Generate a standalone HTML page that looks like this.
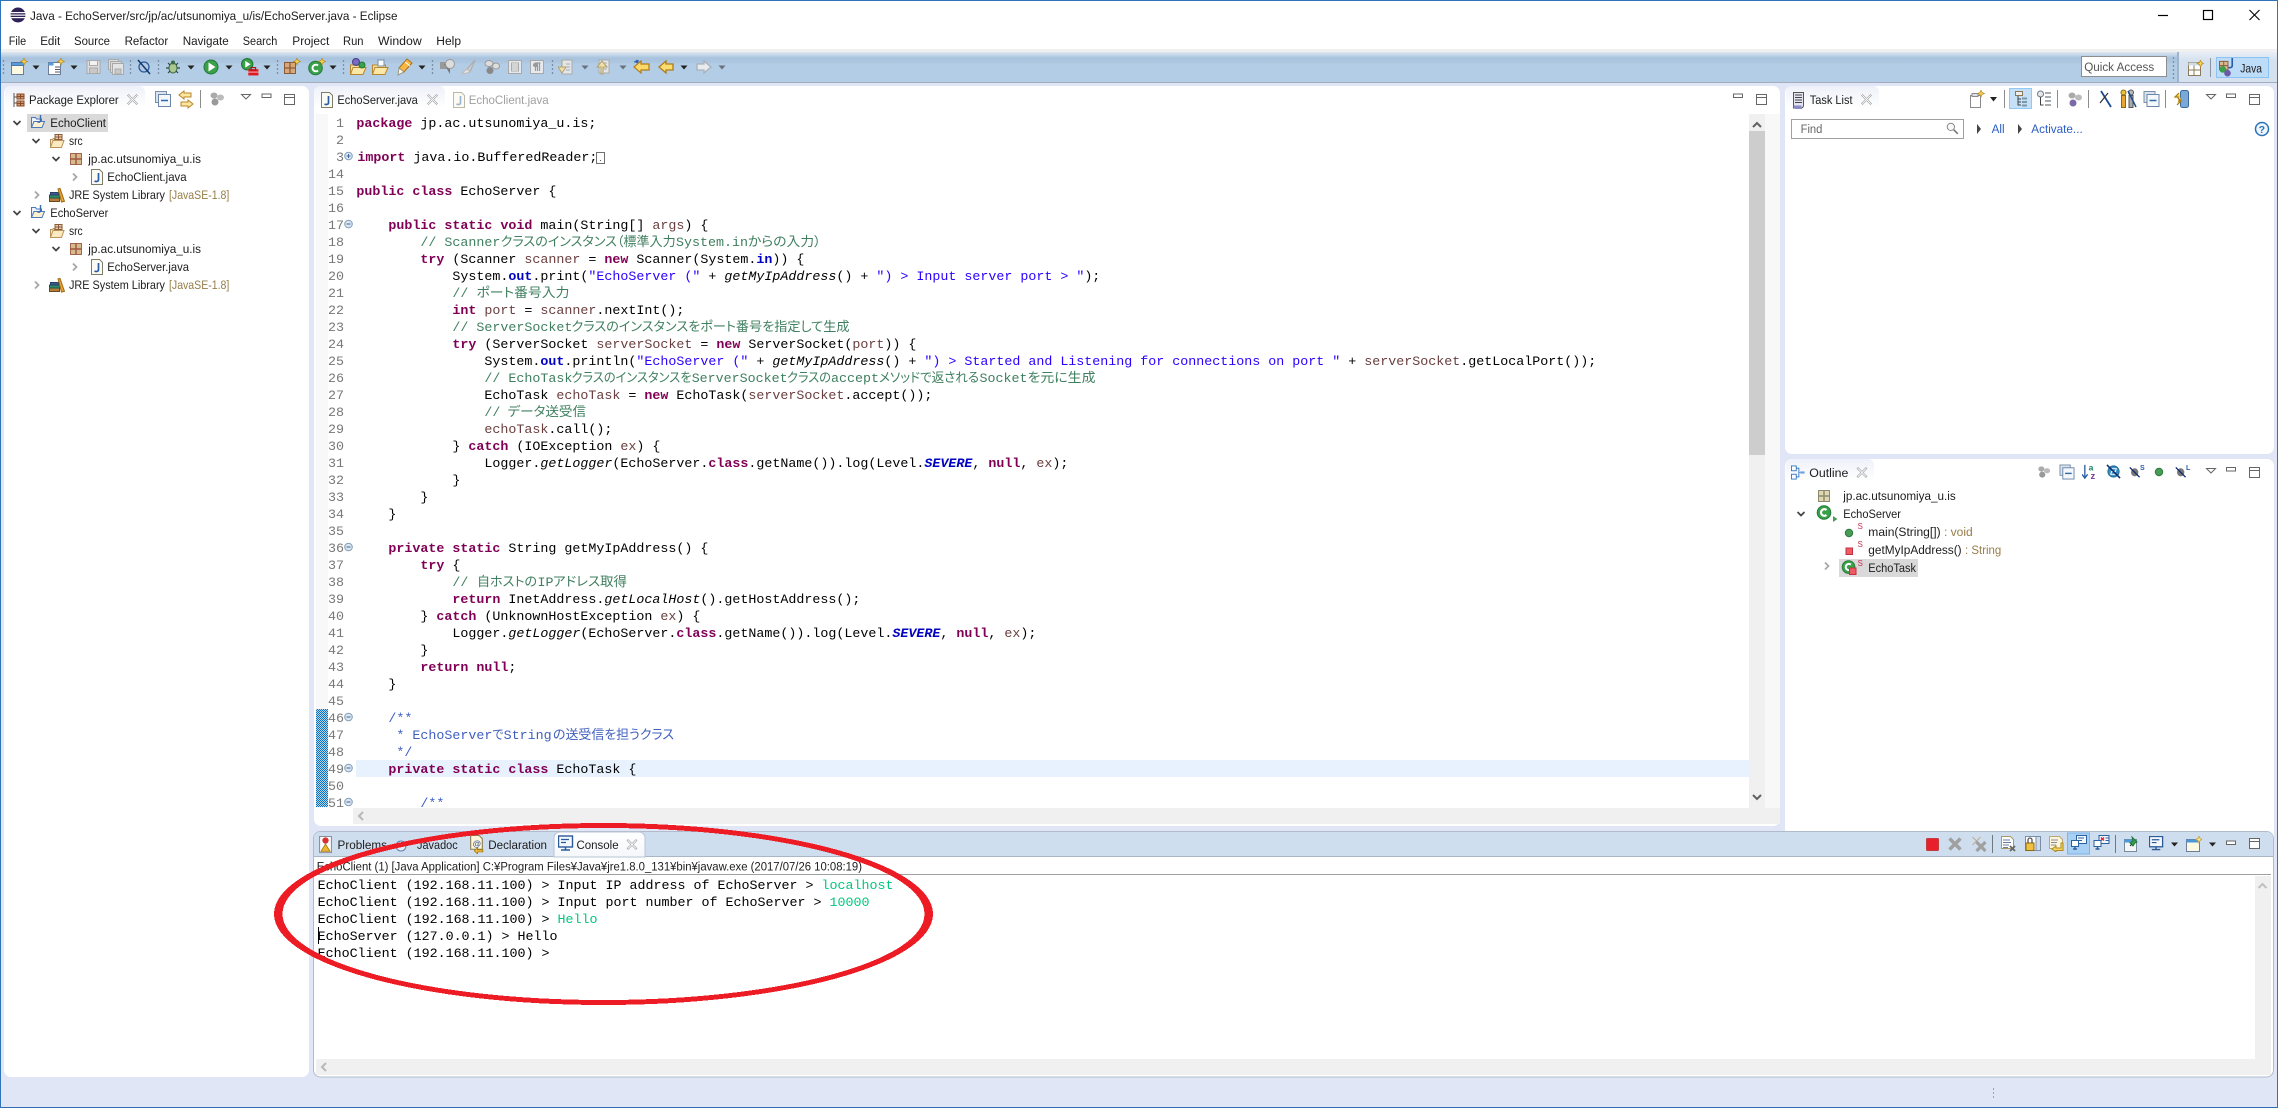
<!DOCTYPE html>
<html><head><meta charset="utf-8"><title>Java - EchoServer/src/jp/ac/utsunomiya_u/is/EchoServer.java - Eclipse</title>
<style>
html,body{margin:0;padding:0;background:#fff;width:2278px;height:1108px;overflow:hidden}
svg{display:block}
text{font-family:"Liberation Sans",sans-serif;font-size:12.4px;fill:#1c1c1c;white-space:pre}
.m text,text.m{font-family:"Liberation Mono",monospace;font-size:13.33px;fill:#000}
.n{font-family:"Liberation Mono",monospace!important;font-size:13.33px!important;fill:#787878!important;text-anchor:end}
.k{font-weight:bold;fill:#7f0055}
.s{fill:#2a00ff}
.c{fill:#3f7f5f}
.d{fill:#3f5fbf}
.f{font-weight:bold;font-style:italic;fill:#0000c0}
.o{font-weight:bold;fill:#0000c0}
.i{font-style:italic}
.v{fill:#6a3e3e}
.g{fill:#00c87d}
text.j{font-family:"Noto Sans CJK JP",sans-serif;font-size:13px;font-feature-settings:"palt";fill:#3f7f5f}
text.jd{fill:#3f5fbf}
.dec{fill:#957d47}
.lnk{fill:#2a5cc5}
</style></head><body>
<svg xmlns="http://www.w3.org/2000/svg" width="2278" height="1108" viewBox="0 0 2278 1108">
<defs>
<linearGradient id="tb" x1="0" y1="0" x2="0" y2="1"><stop offset="0" stop-color="#dfe7f1"/><stop offset=".2" stop-color="#a9c3de"/><stop offset=".35" stop-color="#adc7e1"/><stop offset=".4" stop-color="#b3cde6"/><stop offset="1" stop-color="#b3cde6"/></linearGradient>
<linearGradient id="ptb" x1="0" y1="0" x2="0" y2="1"><stop offset="0" stop-color="#e8eef6"/><stop offset=".3" stop-color="#d5e1ef"/><stop offset="1" stop-color="#d5e1ef"/></linearGradient>
<linearGradient id="tab" x1="0" y1="0" x2="0" y2="1"><stop offset="0" stop-color="#eef1f9"/><stop offset="1" stop-color="#ffffff"/></linearGradient>
<linearGradient id="ctab" x1="0" y1="0" x2="0" y2="1"><stop offset="0" stop-color="#ffffff"/><stop offset="1" stop-color="#f4f7fb"/></linearGradient>
<pattern id="ht" width="2" height="2" patternUnits="userSpaceOnUse"><rect width="2" height="2" fill="#b4d5ee"/><rect width="1" height="1" fill="#0a72c0"/><rect x="1" y="1" width="1" height="1" fill="#0a72c0"/></pattern>
<symbol id="ec" viewBox="0 0 16 16"><circle cx="8" cy="8" r="7.5" fill="#2c2255"/><rect x="0" y="5" width="16" height="1.2" fill="#fff"/><rect x="0" y="7.5" width="16" height="1.2" fill="#fff"/><rect x="0" y="10" width="16" height="1.2" fill="#fff"/></symbol>
<symbol id="pe" viewBox="0 0 16 16"><path d="M3 1v14" stroke="#555" fill="none"/><path d="M3 5h3M3 11h3" stroke="#555"/><rect x="6" y="2" width="7" height="5" fill="#c99a70" stroke="#8a4a28"/><path d="M9.5 2v5M6 4.5h7" stroke="#8a4a28"/><rect x="6" y="9" width="7" height="5" fill="#c99a70" stroke="#8a4a28"/><path d="M9.5 9v5M6 11.5h7" stroke="#8a4a28"/></symbol>
<symbol id="prj" viewBox="0 0 16 16"><path d="M1.5 13V3.5h4l1 1.5h5v3" fill="#eef3fb" stroke="#4a78b8"/><path d="M1.5 13.5l2.5-6h10.5l-2.5 6z" fill="#fdf1cf" stroke="#4a78b8"/><path d="M10.5 1v6c0 1-1.500 1.500-3 1" fill="none" stroke="#3a6ab0" stroke-width="1.400"/></symbol>
<symbol id="src" viewBox="0 0 16 16"><path d="M1.500 14V6.500h2l1-1h1V8" fill="#f8e8c4" stroke="#b8925a"/><path d="M1.500 14.500l2.500-7h11l-2.500 7z" fill="#fbe9c0" stroke="#b8925a"/><rect x="6" y="1.500" width="7" height="5" fill="#e8d0a8" stroke="#8a5a3a"/><path d="M9.500 1.500v5M6 4h7" stroke="#8a5a3a"/></symbol>
<symbol id="pk" viewBox="0 0 16 16"><rect x="2.500" y="2.500" width="11" height="11" fill="#d9b990" stroke="#a0664a"/><path d="M8 2v12M2 8h12" stroke="#9a5a3e" stroke-width="1.400"/></symbol>
<symbol id="pk2" viewBox="0 0 16 16"><rect x="2.500" y="2.500" width="11" height="11" fill="#dcd6b4" stroke="#8e8a6a"/><path d="M8 2v12M2 8h12" stroke="#8e8a6a" stroke-width="1.400"/></symbol>
<symbol id="jf" viewBox="0 0 16 16"><path d="M2.500 .5h8l3 3v12h-11z" fill="#fbfbf4" stroke="#7e7e68"/><path d="M9.500 4v6.500c0 2-2 2.500-4 1.500" stroke="#2a5ca8" stroke-width="1.700" fill="none"/></symbol>
<symbol id="jfg" viewBox="0 0 16 16"><path d="M2.500 .5h8l3 3v12h-11z" fill="#fbfbf4" stroke="#bbb8a8"/><path d="M9.500 4v6.500c0 2-2 2.500-4 1.500" stroke="#9db4d2" stroke-width="1.700" fill="none"/></symbol>
<symbol id="jre" viewBox="0 0 16 16"><rect x="0.500" y="11" width="10" height="3.500" fill="#b57c3c" stroke="#6a4a20"/><rect x="0.500" y="8" width="10" height="3" fill="#2f8a6a" stroke="#1e5a48"/><rect x="1.500" y="5.500" width="8" height="2.500" fill="#3a5a90" stroke="#26406a"/><path d="M9 2l2-.6 4.500 13-3 .6z" fill="#e6a53c" stroke="#a06a10"/></symbol>
<symbol id="cl" viewBox="0 0 14 14"><path d="M2 2l10 10M12 2L2 12" stroke="#8c8c8c" stroke-width="2.600" stroke-linecap="square"/><path d="M2 2l10 10M12 2L2 12" stroke="#fff" stroke-width="1.300" stroke-linecap="square"/></symbol>
<symbol id="col" viewBox="0 0 16 16"><rect x=".5" y=".5" width="11" height="11" fill="#dbe4ee" stroke="#7a8ea8"/><rect x="3.500" y="3.500" width="12" height="12" fill="#f4f7fb" stroke="#6a86a8"/><path d="M6 9.500h7" stroke="#2a6ab0" stroke-width="1.500"/></symbol>
<symbol id="lnk" viewBox="0 0 16 20"><path d="M6 1L1 5l5 4V7h7V3H6z" fill="#fbe7a0" stroke="#b8862a"/><path d="M10 10l5 4-5 4v-2H3v-4h7z" fill="#fbe7a0" stroke="#b8862a"/></symbol>
<symbol id="vw" viewBox="0 0 16 16"><ellipse cx="5" cy="4.500" rx="3.500" ry="3" fill="#aaa"/><ellipse cx="11.500" cy="6.500" rx="3.500" ry="3" fill="#bbb"/><ellipse cx="6" cy="11" rx="3.500" ry="3.500" fill="#999"/></symbol>
<symbol id="vw2" viewBox="0 0 16 16"><ellipse cx="5" cy="4.500" rx="3.500" ry="3" fill="#aaa"/><ellipse cx="11.500" cy="6.500" rx="3.500" ry="3" fill="#bbb"/><ellipse cx="6" cy="12" rx="3.500" ry="3.500" fill="#7a6aa8"/></symbol>
<symbol id="nw" viewBox="0 0 18 18"><rect x="1.500" y="4.500" width="12" height="12" fill="#fdf8e2" stroke="#6a7e98"/><rect x="1.500" y="4.500" width="12" height="3" fill="#5a9ad8" stroke="#4a78a8"/><path d="M14 0l1 2.500 2.500 1-2.500 1-1 2.500-1-2.500-2.500-1 2.500-1z" fill="#f8d850" stroke="#b88a20" stroke-width=".7"/></symbol>
<symbol id="nw2" viewBox="0 0 18 18"><rect x="1.500" y="4.500" width="12" height="12" fill="#fff" stroke="#6a7e98"/><rect x="1.500" y="4.500" width="5" height="3" fill="#5a9ad8"/><path d="M8 9h5M8 11.500h5M8 14h5" stroke="#556"/><path d="M14 0l1 2.500 2.500 1-2.500 1-1 2.500-1-2.500-2.500-1 2.500-1z" fill="#f8d850" stroke="#b88a20" stroke-width=".7"/></symbol>
<symbol id="sv" viewBox="0 0 16 16"><rect x="1.500" y="1.500" width="13" height="13" fill="#dcdcdc" stroke="#a8a8a8"/><rect x="4" y="1.500" width="8" height="5" fill="#f2f2f2" stroke="#aaa"/><rect x="4" y="9" width="8" height="5.500" fill="#c8c8c8" stroke="#aaa"/></symbol>
<symbol id="sva" viewBox="0 0 16 16"><rect x=".5" y=".5" width="10" height="10" fill="#dcdcdc" stroke="#aaa"/><rect x="2.500" y="2.500" width="11" height="11" fill="#dcdcdc" stroke="#aaa"/><rect x="4.500" y="4.500" width="11" height="11" fill="#e4e4e4" stroke="#a8a8a8"/><rect x="7" y="10" width="6" height="5" fill="#c8c8c8" stroke="#aaa"/></symbol>
<symbol id="skp" viewBox="0 0 16 16"><ellipse cx="8" cy="8" rx="5" ry="5" fill="#b4c8e0" stroke="#2a5a98" stroke-width="1.300"/><path d="M2 1l12 14" stroke="#123a70" stroke-width="1.500"/></symbol>
<symbol id="bug" viewBox="0 0 16 16"><ellipse cx="8" cy="9" rx="4" ry="5" fill="#a8c890" stroke="#3a6a4a"/><circle cx="8" cy="3.500" r="2" fill="#3a6a4a"/><path d="M3 4l2 2M13 4l-2 2M1 9h3M15 9h-3M3 14l2-2M13 14l-2-2" stroke="#2a4a38" stroke-width="1.200"/></symbol>
<symbol id="run" viewBox="0 0 16 16"><circle cx="8" cy="8" r="7" fill="#3aa04a" stroke="#227a38"/><path d="M5.500 3.500v9L12.500 8z" fill="#fff"/></symbol>
<symbol id="ext" viewBox="0 0 16 16"><circle cx="5.500" cy="5.500" r="5" fill="#3aa04a" stroke="#227a38"/><path d="M3.800 2.500v6L8.500 5.500z" fill="#fff"/><rect x="6.500" y="10" width="9" height="5.500" fill="#e01820"/><rect x="9" y="8.500" width="4" height="2" fill="none" stroke="#b01018"/><path d="M6.500 12.500h9" stroke="#fff" stroke-width=".6"/></symbol>
<symbol id="npk" viewBox="0 0 18 18"><rect x="1.500" y="4.500" width="11" height="11" fill="#d9a878" stroke="#8a5a38"/><path d="M7 4v12M1 10h12" stroke="#8a5a38" stroke-width="1.300"/><path d="M14 0l1 2.500 2.500 1-2.500 1-1 2.500-1-2.500-2.500-1 2.500-1z" fill="#f8d850" stroke="#b88a20" stroke-width=".7"/></symbol>
<symbol id="ncl" viewBox="0 0 18 18"><circle cx="7.500" cy="10" r="6.800" fill="#3aa04a" stroke="#227a38"/><path d="M10 7.500a3.300 3.300 0 1 0 0 5" stroke="#fff" stroke-width="2" fill="none"/><path d="M14 0l1 2.500 2.500 1-2.500 1-1 2.500-1-2.500-2.500-1 2.500-1z" fill="#f8d850" stroke="#b88a20" stroke-width=".7"/></symbol>
<symbol id="cc" viewBox="0 0 16 16"><circle cx="7.500" cy="7.500" r="6.800" fill="#3aa04a" stroke="#227a38"/><path d="M10 5a3.300 3.300 0 1 0 0 5" stroke="#fff" stroke-width="2.200" fill="none"/></symbol>
<symbol id="otp" viewBox="0 0 18 18"><path d="M1.500 16V7h13v2" fill="#f8e0a0" stroke="#b8862a"/><path d="M1.500 16.500L4 9.500h13l-3 7z" fill="#fbe7a8" stroke="#b8862a"/><circle cx="7" cy="4" r="3.500" fill="#7a6ac0" stroke="#4a3a88"/><circle cx="13" cy="7" r="3" fill="#3aa04a" stroke="#227a38"/></symbol>
<symbol id="opn" viewBox="0 0 18 18"><path d="M1.500 16V7h13v2" fill="#f8e0a0" stroke="#b8862a"/><path d="M1.500 16.500L4 9.500h13l-3 7z" fill="#fbe7a8" stroke="#b8862a"/><rect x="7" y="2" width="6" height="6" fill="#fff" stroke="#7a8ea8"/></symbol>
<symbol id="pen" viewBox="0 0 18 18"><path d="M11 1l5 4-8 9-5-4z" fill="#f8b840" stroke="#a8701a"/><path d="M3 10l5 4-6 3z" fill="#fffbe8" stroke="#998"/><path d="M9 4l5 4" stroke="#fff"/></symbol>
<symbol id="g1" viewBox="0 0 16 16"><rect x="1" y="3" width="7" height="7" fill="#999"/><path d="M5 5h6v10z" fill="#777"/><circle cx="11" cy="5" r="4.500" fill="#ddd" stroke="#999"/></symbol>
<symbol id="g2" viewBox="0 0 16 16"><path d="M14 1L6 10l3 3z" fill="#ccc" stroke="#aaa"/><path d="M6 10c-2 1-3 3-5 4 3 1 6 0 8-1z" fill="#e4e4e4" stroke="#bbb"/></symbol>
<symbol id="g3" viewBox="0 0 16 16"><ellipse cx="5" cy="4.500" rx="4" ry="3" fill="#ddd" stroke="#999"/><ellipse cx="12" cy="7" rx="3.500" ry="3" fill="#ddd" stroke="#999"/><ellipse cx="6" cy="11.500" rx="3.500" ry="3.500" fill="#888"/></symbol>
<symbol id="g4" viewBox="0 0 16 16"><rect x="1.500" y="1.500" width="13" height="13" fill="#e4e8ec" stroke="#a8a8a8"/><rect x="4.500" y="4" width="7" height="8" fill="#fff" stroke="#aaa"/><path d="M5 6h6M5 8h6M5 10h6" stroke="#aaa"/></symbol>
<symbol id="g5" viewBox="0 0 16 16"><rect x="1.500" y="1.500" width="13" height="13" fill="#e6eaee" stroke="#a8a8a8"/><path d="M6.500 12V4h5M8.500 12V4M10.500 12V4" stroke="#999" stroke-width="1.200" fill="none"/><path d="M8 4H6a2 2 0 0 0 0 4h2z" fill="#999"/></symbol>
<symbol id="ann" viewBox="0 0 16 16"><path d="M4 1h10v14H4z" fill="#e2e6ea" stroke="#aaa"/><path d="M8 5h4M8 8h4M8 11h4" stroke="#aaa"/><path d="M4 1v7h4L4 14 0 8h4z" fill="#f0dfa8" stroke="#b0a070"/></symbol>
<symbol id="anu" viewBox="0 0 16 16"><path d="M4 1h10v13H4z" fill="#e2e6ea" stroke="#aaa"/><path d="M8 4h4M8 7h4M8 10h4" stroke="#aaa"/><path d="M6 15V8H2l5-6 5 6H8v7z" fill="#f0dfa8" stroke="#b0a070"/></symbol>
<symbol id="ykp" viewBox="0 0 18 16"><path d="M1 8l7-6v3h8v6H8v3z" fill="#fbd868" stroke="#b07c1a" stroke-width="1.200"/><path d="M3 1l2 3M1 3l5-1M3 4l2-3" stroke="#2a5ca8" stroke-width="1.100"/></symbol>
<symbol id="yl" viewBox="0 0 16 16"><path d="M1 8l7-6v3h7v6H8v3z" fill="#fbdc70" stroke="#b07c1a" stroke-width="1.300"/></symbol>
<symbol id="gr" viewBox="0 0 16 16"><path d="M15 8L8 2v3H1v6h7v3z" fill="#e8ecf0" stroke="#aab0b8" stroke-width="1.300"/></symbol>
<symbol id="ts" viewBox="0 0 14 18"><path d="M1.500 1.500h10v13c0 2-2 3-3 2.500h-7z" fill="#e4e4f2" stroke="#555"/><path d="M3 4h7M3 6.500h7M3 9h7M3 11.500h7" stroke="#444"/><path d="M1.500 14.500h8v3.500h-6c-1.500 0-2-1.500-2-3.500z" fill="#8a8ac8"/></symbol>
<symbol id="ntk" viewBox="0 0 16 18"><rect x="1.500" y="5.500" width="10" height="12" fill="#fff" stroke="#8a8a8a"/><rect x="3" y="3.500" width="6" height="3" fill="#dde" stroke="#8a8a8a"/><path d="M12 0l1 2.500 2.500 1-2.500 1-1 2.500-1-2.500-2.500-1 2.500-1z" fill="#f8d850" stroke="#b88a20" stroke-width=".7"/></symbol>
<symbol id="tr1" viewBox="0 0 16 18"><rect x="2.500" y="1.500" width="7" height="4" fill="#eee" stroke="#8a7a5a"/><path d="M5 6v9h3M5 9h3M5 12h3" stroke="#444" fill="none"/><rect x="9" y="7.500" width="5" height="2" fill="#79a" /><rect x="9" y="11" width="5" height="2" fill="#79a"/><rect x="9" y="14.500" width="5" height="2" fill="#79a"/></symbol>
<symbol id="tr2" viewBox="0 0 16 18"><circle cx="4.500" cy="4" r="3" fill="#e8e8e8" stroke="#6a7a8a"/><path d="M4.500 7v8h3" stroke="#444" fill="none"/><path d="M9 3h6M9 7h6M9 11h6M9 15h6" stroke="#8a9098" stroke-width="1.500"/></symbol>
<symbol id="sx" viewBox="0 0 16 20"><path d="M3 2l10 16" stroke="#1a4a90" stroke-width="1.800"/><path d="M2 14l8-10" stroke="#333" stroke-width="1.200"/></symbol>
<symbol id="ppl" viewBox="0 0 18 20"><circle cx="4.500" cy="3.500" r="2.500" fill="#f0c040" stroke="#8a6a10"/><rect x="2.500" y="6.500" width="4" height="12" fill="#e8a830" stroke="#8a6a10"/><circle cx="12" cy="3.500" r="2.500" fill="#bbb" stroke="#555"/><rect x="10" y="6.500" width="4" height="12" fill="#aaa" stroke="#555"/><path d="M9 2l8 16" stroke="#1a4a90" stroke-width="1.500"/></symbol>
<symbol id="syn" viewBox="0 0 16 20"><rect x="6.500" y="1.500" width="8" height="17" rx="2" fill="#7aa8d8" stroke="#3a6a9a"/><path d="M5 4l-4 4 3 0c0 2 1 3 3 3M3 16l4-4-3 0" fill="#f8d850" stroke="#a87a10" stroke-width="1.200"/></symbol>
<symbol id="srch" viewBox="0 0 16 16"><circle cx="6" cy="6" r="4.500" fill="#f8f8f8" stroke="#888" stroke-width="1.200"/><path d="M9.500 9.500l5 5" stroke="#777" stroke-width="2"/></symbol>
<symbol id="out" viewBox="0 0 16 16"><rect x=".5" y=".5" width="5.500" height="5.500" fill="#fff" stroke="#2a72c0"/><rect x=".5" y="10" width="5.500" height="5.500" fill="#fff" stroke="#2a72c0"/><path d="M6 3h3v10H6M9 8h1" stroke="#2a72c0" fill="none"/><rect x="10.500" y="6.800" width="5" height="2.400" fill="#6aa0d8"/></symbol>
<symbol id="az" viewBox="0 0 18 18"><path d="M3 2v13M0 12l3 4 3-4" stroke="#2a5ca8" stroke-width="1.400" fill="none"/><text x="7" y="8" style="font:bold 9px 'Liberation Sans',sans-serif;fill:#1a8060">a</text><text x="9" y="17" style="font:bold 10px 'Liberation Sans',sans-serif;fill:#7a3a98">z</text></symbol>
<symbol id="nof" viewBox="0 0 16 16"><circle cx="8" cy="8" r="6" fill="#3a90c0" stroke="#1a6a98"/><path d="M6 5h5l-1 3H6l-1 3h5" stroke="#fff" fill="none"/><path d="M1 1l14 14" stroke="#0d2a70" stroke-width="1.600"/></symbol>
<symbol id="nos" viewBox="0 0 16 16"><ellipse cx="7" cy="9" rx="4.500" ry="5" fill="#777"/><path d="M1 3l12 12" stroke="#0d2a70" stroke-width="1.600"/></symbol>
<symbol id="stop" viewBox="0 0 14 14"><rect x=".5" y=".5" width="13" height="13" rx="1" fill="#e8202c" stroke="#c04040"/></symbol>
<symbol id="xg" viewBox="0 0 16 16"><path d="M2.500 2.500l11 11M13.500 2.500l-11 11" stroke="#a0a0a0" stroke-width="3.400"/></symbol>
<symbol id="xxg" viewBox="0 0 16 16"><path d="M2 1l8 8M10 1L2 9" stroke="#ddd" stroke-width="3" /><path d="M2 1l8 8M10 1L2 9" stroke="#aaa" stroke-width="1"/><path d="M6 6l9 9M15 6l-9 9" stroke="#a0a0a0" stroke-width="3.200"/></symbol>
<symbol id="clr" viewBox="0 0 16 16"><path d="M1.500 .5h9l3 3v9h-12z" fill="#fff" stroke="#a89a6a"/><path d="M3 4h7M3 6.500h8M3 9h6M3 11.500h5" stroke="#6a7e9a"/><path d="M10 10l5 5M15 10l-5 5" stroke="#666" stroke-width="1.800"/></symbol>
<symbol id="lck" viewBox="0 0 16 16"><rect x=".5" y=".5" width="15" height="14" fill="#fff" stroke="#7a8ea8"/><rect x="11" y=".5" width="4.500" height="14" fill="#cfdaea" stroke="#7a8ea8"/><rect x="1" y="7" width="8" height="7.500" fill="#f0c040" stroke="#8a6a10"/><path d="M3 7V4a2 2 0 0 1 4 0v3" fill="none" stroke="#555" stroke-width="1.300"/></symbol>
<symbol id="wrp" viewBox="0 0 16 16"><path d="M1.500 .5h10l3 3v9h-13z" fill="#fdf6dc" stroke="#b8a878"/><path d="M3 4h7M3 6.500h6M3 9h5" stroke="#8a8a90"/><path d="M13 7v5H8V10l-4 3 4 3v-1.500h7V7z" fill="#f8d860" stroke="#b08a20"/></symbol>
<symbol id="cs1" viewBox="0 0 16 16"><rect x="5.500" y=".5" width="10" height="8" fill="#f4f7fc" stroke="#2a62a0"/><path d="M7 3h6M7 5.500h4" stroke="#2a62a0"/><rect x=".5" y="5.500" width="7" height="6" fill="#fff" stroke="#2a62a0"/><path d="M2 14h4M4 11.500V14" stroke="#2a62a0" stroke-width="1.400"/></symbol>
<symbol id="cs2" viewBox="0 0 16 16"><rect x="5.500" y=".5" width="10" height="8" fill="#f4f7fc" stroke="#2a62a0"/><path d="M7.500 2.500l3 3M10.500 2.500l-3 3" stroke="#e02030" stroke-width="1.400"/><path d="M12 3h3M12 5.500h3" stroke="#2a62a0"/><rect x=".5" y="5.500" width="7" height="6" fill="#fff" stroke="#2a62a0"/><path d="M2 14h4M4 11.500V14" stroke="#2a62a0" stroke-width="1.400"/></symbol>
<symbol id="pin" viewBox="0 0 16 16"><rect x=".5" y="3.500" width="12" height="12" fill="#f4f7fa" stroke="#7a8a9a"/><rect x=".5" y="3.500" width="12" height="3" fill="#4a98d8"/><path d="M8 1l5 5-2 1-2 3-3-3 3-2z" fill="#3aa04a" stroke="#227a38"/><path d="M6 10l2-2" stroke="#333"/></symbol>
<symbol id="mon" viewBox="0 0 16 16"><rect x=".5" y=".5" width="14" height="11" fill="#f4f7fc" stroke="#2a5a98" stroke-width="1.400"/><path d="M3 4h8M3 7h5" stroke="#2a5a98" stroke-width="1.300"/><path d="M3 14.500h9M7.500 11.500v3" stroke="#2a5a98" stroke-width="1.500"/></symbol>
<symbol id="ncs" viewBox="0 0 16 16"><rect x=".5" y="3.500" width="13" height="12" fill="#fdf8e2" stroke="#6a7e98"/><rect x=".5" y="3.500" width="13" height="3" fill="#4a98d8"/><path d="M13 0l1 2.500 2 1-2 1-1 2.500-1-2.500-2.500-1 2.500-1z" fill="#fbe890" stroke="#c09a30" stroke-width=".7"/></symbol>
<symbol id="per" viewBox="0 0 16 16"><rect x=".5" y="2.500" width="12" height="13" fill="#fff" stroke="#8a7a5a"/><rect x=".5" y="2.500" width="12" height="3" fill="#cfdde8"/><path d="M6 5.500v10M.5 10h12" stroke="#8a7a5a"/><path d="M12.500 0l1 2.500 2 1-2 1-1 2.500-1-2.500-2.500-1 2.500-1z" fill="#f8d850" stroke="#b88a20" stroke-width=".7"/></symbol>
<symbol id="jva" viewBox="0 0 18 20"><rect x=".5" y="3.500" width="9" height="9" fill="#d9b990" stroke="#8a5a38"/><path d="M5 3v10M0 8h10" stroke="#8a5a38"/><path d="M14 0v8c0 2-2 2.500-4 2" fill="none" stroke="#2a5ca8" stroke-width="1.700"/><circle cx="4" cy="12" r="3.500" fill="#3aa04a"/><circle cx="9" cy="16" r="3.500" fill="#6a5aa8"/></symbol>
<symbol id="wdoc" viewBox="0 0 14 18"><path d="M1.500 .5h8l3 3v10h-11z" fill="#fdf6dc" stroke="#8a7a4a"/><text x="3.500" y="11" style="font:bold 8px 'Liberation Sans',sans-serif;fill:#3a5a98">@</text><path d="M5 15l3-3v2h5v2H8v2z" fill="#f8c040" stroke="#a87a10" stroke-width=".8"/></symbol>
<symbol id="prb" viewBox="0 0 14 20"><rect x=".5" y=".5" width="13" height="18" fill="#fff" stroke="#7a8090"/><circle cx="7" cy="5" r="3.500" fill="#d83030"/><path d="M7 9l5 8H2z" fill="#f0b830" stroke="#a87a10"/></symbol>
</defs>

<!-- window chrome -->
<rect width="2278" height="1108" fill="#e0e6f5"/>
<rect width="2278" height="49" fill="#fff"/>
<rect y="49" width="2278" height="3" fill="#f0f0f0"/>
<rect y="52" width="2178" height="30" fill="url(#tb)"/>
<rect x="2178" y="52" width="100" height="30" fill="url(#ptb)"/>
<rect y="82" width="2278" height="1" fill="#a3adbd"/>
<rect x="2177" y="52" width="2" height="30" fill="#9fb4cb"/>
<rect y="0" width="2278" height="1" fill="#2f73b8"/>
<rect y="1107" width="2278" height="1" fill="#2f6db0"/>
<rect x="0" width="1" height="1108" fill="#2f73b8"/>
<rect x="2277" width="1" height="1108" fill="#2f73b8"/>

<!-- title -->
<use href="#ec" x="10" y="7" width="16" height="16"/>
<text x="30" y="20" textLength="367.5" lengthAdjust="spacingAndGlyphs">Java - EchoServer/src/jp/ac/utsunomiya_u/is/EchoServer.java - Eclipse</text>
<path d="M2158 15.500h10" stroke="#000" stroke-width="1.200"/>
<rect x="2203.500" y="10.500" width="9" height="9" fill="none" stroke="#000" stroke-width="1.200"/>
<path d="M2249.500 10l10 10M2259.500 10l-10 10" stroke="#000" stroke-width="1.100"/>

<!-- menu -->
<g>
<text x="8.700" y="45" textLength="17.500" lengthAdjust="spacingAndGlyphs">File</text>
<text x="40.200" y="45" textLength="20" lengthAdjust="spacingAndGlyphs">Edit</text>
<text x="74" y="45" textLength="36" lengthAdjust="spacingAndGlyphs">Source</text>
<text x="124.600" y="45" textLength="43.600" lengthAdjust="spacingAndGlyphs">Refactor</text>
<text x="182.700" y="45" textLength="46" lengthAdjust="spacingAndGlyphs">Navigate</text>
<text x="242.800" y="45" textLength="34.500" lengthAdjust="spacingAndGlyphs">Search</text>
<text x="292.300" y="45" textLength="37" lengthAdjust="spacingAndGlyphs">Project</text>
<text x="343" y="45" textLength="20.500" lengthAdjust="spacingAndGlyphs">Run</text>
<text x="378" y="45" textLength="43.700" lengthAdjust="spacingAndGlyphs">Window</text>
<text x="436.300" y="45" textLength="24.700" lengthAdjust="spacingAndGlyphs">Help</text>
</g>

<!-- toolbar grips -->
<g stroke="#7c8ea4" stroke-width="1.300" stroke-dasharray="2 2">
<path d="M3.500 60v16M130.500 60v16M158.500 60v16M277.500 60v16M343.500 60v16M432.500 60v16M552.500 60v16M2173.500 57v22"/>
</g>
<!-- toolbar icons -->
<use href="#nw" x="10" y="58" width="18" height="18"/>
<use href="#nw2" x="47" y="58" width="18" height="18"/>
<use href="#sv" x="85.500" y="59" width="16" height="16"/>
<use href="#sva" x="108" y="59" width="16" height="16"/>
<use href="#skp" x="136" y="59" width="16" height="16"/>
<use href="#bug" x="165" y="59" width="16" height="16"/>
<use href="#run" x="203" y="59" width="16" height="16"/>
<use href="#ext" x="241" y="58" width="18" height="18"/>
<use href="#npk" x="283" y="58" width="18" height="18"/>
<use href="#ncl" x="308" y="58" width="18" height="18"/>
<use href="#otp" x="349" y="58" width="18" height="18"/>
<use href="#opn" x="371" y="58" width="18" height="18"/>
<use href="#pen" x="396" y="58" width="18" height="18"/>
<use href="#g1" x="439" y="59" width="16" height="16"/>
<use href="#g2" x="461" y="59" width="16" height="16"/>
<use href="#g3" x="484" y="59" width="16" height="16"/>
<use href="#g4" x="507" y="59" width="16" height="16"/>
<use href="#g5" x="529" y="59" width="16" height="16"/>
<use href="#ann" x="558" y="59" width="16" height="16"/>
<use href="#anu" x="595" y="59" width="16" height="16"/>
<use href="#ykp" x="633" y="59" width="18" height="16"/>
<use href="#yl" x="658" y="59" width="16" height="16"/>
<use href="#gr" x="696" y="59" width="16" height="16"/>
<g fill="#222">
<path d="M32.500 65.500h7l-3.500 4zM70.500 65.500h7l-3.500 4zM187.500 65.500h7l-3.500 4zM225.500 65.500h7l-3.500 4zM263.500 65.500h7l-3.500 4zM329.500 65.500h7l-3.500 4zM418.500 65.500h7l-3.500 4zM680.500 65.500h7l-3.500 4z"/>
</g>
<g fill="#68717d"><path d="M581.500 65.500h7l-3.500 4zM619.500 65.500h7l-3.500 4zM718.500 65.500h7l-3.500 4z"/></g>

<!-- quick access & perspective -->
<rect x="2081.500" y="56.500" width="85" height="20" fill="#fff" stroke="#8e8e8e"/>
<text x="2084.200" y="71" textLength="70" lengthAdjust="spacingAndGlyphs" style="fill:#555">Quick Access</text>
<use href="#per" x="2188" y="60" width="16" height="16"/>
<rect x="2210" y="58" width="1" height="19" fill="#8a95a4"/>
<rect x="2216.500" y="57.500" width="52" height="20" fill="#bcdcf8" stroke="#8cc3f5"/>
<use href="#jva" x="2219" y="58" width="17" height="19"/>
<text x="2240.300" y="72.700" textLength="21.700" lengthAdjust="spacingAndGlyphs">Java</text>

<!-- package explorer panel -->
<rect x="4" y="86" width="305" height="991" rx="7" fill="#fff"/>
<path d="M5 108V92a6 6 0 0 1 6-6h128a6 6 0 0 1 6 6v16z" fill="url(#tab)"/>
<use href="#pe" x="11" y="92" width="16" height="16"/>
<text x="29" y="104" textLength="89.700" lengthAdjust="spacingAndGlyphs">Package Explorer</text>
<use href="#cl" x="127" y="94" width="11" height="11"/>
<use href="#col" x="155" y="91" width="16" height="16"/>
<use href="#lnk" x="178" y="90" width="16" height="20"/>
<rect x="200" y="90" width="1" height="18" fill="#8c8c8c"/>
<use href="#vw" x="209" y="91" width="16" height="16"/>
<path d="M241.500 94.500h9l-4.500 4.500z" fill="#fff" stroke="#666"/>
<rect x="262" y="94" width="9" height="3.500" fill="#fff" stroke="#666"/>
<rect x="284.500" y="94.500" width="10" height="10" fill="#fff" stroke="#666"/><path d="M284.500 97.500h10" stroke="#666"/>

<rect x="27" y="114" width="81" height="18" fill="#d9d9d9"/>
<g fill="none" stroke="#444" stroke-width="1.700"><path d="M13.500 121l3.500 3.500 3.500-3.500M32.500 139l3.500 3.500 3.500-3.500M52.500 157l3.500 3.500 3.500-3.500M13.500 211l3.500 3.500 3.500-3.500M32.500 229l3.500 3.500 3.500-3.500M52.500 247l3.500 3.500 3.500-3.500"/></g>
<g fill="none" stroke="#a8a8a8" stroke-width="1.800"><path d="M73 173.500l3.500 3.500-3.500 3.500M35 191.500l3.500 3.500-3.500 3.500M73 263.500l3.500 3.500-3.500 3.500M35 281.500l3.500 3.500-3.500 3.500"/></g>
<use href="#prj" x="30" y="114" width="16" height="16"/>
<use href="#src" x="49" y="133" width="16" height="16"/>
<use href="#pk" x="68" y="151" width="16" height="16"/>
<use href="#jf" x="89" y="169" width="16" height="16"/>
<use href="#jre" x="49" y="187" width="16" height="16"/>
<use href="#prj" x="30" y="204" width="16" height="16"/>
<use href="#src" x="49" y="223" width="16" height="16"/>
<use href="#pk" x="68" y="241" width="16" height="16"/>
<use href="#jf" x="89" y="259" width="16" height="16"/>
<use href="#jre" x="49" y="277" width="16" height="16"/>
<text x="50.300" y="127" textLength="55.700" lengthAdjust="spacingAndGlyphs">EchoClient</text>
<text x="69" y="145" textLength="13.700" lengthAdjust="spacingAndGlyphs">src</text>
<text x="88.300" y="163" textLength="112.700" lengthAdjust="spacingAndGlyphs">jp.ac.utsunomiya_u.is</text>
<text x="107.300" y="181" textLength="79.300" lengthAdjust="spacingAndGlyphs">EchoClient.java</text>
<text x="69" y="199" textLength="96" lengthAdjust="spacingAndGlyphs">JRE System Library</text>
<text x="169" y="199" textLength="60.300" lengthAdjust="spacingAndGlyphs" class="dec">[JavaSE-1.8]</text>
<text x="50.300" y="217" textLength="58" lengthAdjust="spacingAndGlyphs">EchoServer</text>
<text x="69" y="235" textLength="13.700" lengthAdjust="spacingAndGlyphs">src</text>
<text x="88.300" y="253" textLength="112.700" lengthAdjust="spacingAndGlyphs">jp.ac.utsunomiya_u.is</text>
<text x="107.300" y="271" textLength="81.700" lengthAdjust="spacingAndGlyphs">EchoServer.java</text>
<text x="69" y="289" textLength="96" lengthAdjust="spacingAndGlyphs">JRE System Library</text>
<text x="169" y="289" textLength="60.300" lengthAdjust="spacingAndGlyphs" class="dec">[JavaSE-1.8]</text>

<!-- editor panel -->
<rect x="314" y="86" width="1466" height="740" rx="7" fill="#fff"/>
<path d="M314 108V92a6 6 0 0 1 6-6h119a6 6 0 0 1 6 6v16z" fill="url(#tab)"/>
<use href="#jf" x="319" y="92" width="16" height="16"/>
<text x="337.400" y="104" textLength="80.400" lengthAdjust="spacingAndGlyphs">EchoServer.java</text>
<use href="#cl" x="427" y="94" width="11" height="11"/>
<use href="#jfg" x="451" y="92" width="16" height="16"/>
<text x="468.700" y="104" textLength="80" lengthAdjust="spacingAndGlyphs" style="fill:#a0a0a0">EchoClient.java</text>
<rect x="1733.500" y="94" width="9" height="3.500" fill="#fff" stroke="#666"/>
<rect x="1756.500" y="94.500" width="10" height="10" fill="#fff" stroke="#666"/><path d="M1756.500 97.500h10" stroke="#666"/>

<rect x="316" y="114" width="12" height="694" fill="#f8f8f8"/>
<rect x="316" y="709" width="12" height="98" fill="url(#ht)"/>
<rect x="356" y="760" width="1393" height="17" fill="#e8f2fe"/>
<!-- scrollbars -->
<rect x="1749" y="114" width="16" height="694" fill="#f0f0f0"/>
<rect x="1749" y="131" width="16" height="324" fill="#cdcdcd"/>
<rect x="1765" y="114" width="15" height="694" fill="#f8f8f8"/>
<path d="M1753 127l4-4 4 4" fill="none" stroke="#606060" stroke-width="2"/>
<path d="M1753 795l4 4 4-4" fill="none" stroke="#606060" stroke-width="2"/>
<rect x="353" y="808" width="1427" height="16" fill="#f0f0f0"/>
<path d="M363 812l-4 4 4 4" fill="none" stroke="#b8b8b8" stroke-width="2"/>

<!-- fold markers -->
<g fill="#dde6f0" stroke="#7e9bb8">
<circle cx="348.500" cy="156" r="3.800"/><circle cx="348.500" cy="224" r="3.800"/><circle cx="348.500" cy="547" r="3.800"/><circle cx="348.500" cy="717" r="3.800"/><circle cx="348.500" cy="768" r="3.800"/><circle cx="348.500" cy="802" r="3.800"/>
</g>
<path d="M346.500 156h4M346.500 224h4M346.500 547h4M346.500 717h4M346.500 768h4M346.500 802h4" stroke="#3a6aa0"/>
<path d="M348.500 154v4" stroke="#3a6aa0"/>
<rect x="596.500" y="152.500" width="8" height="11" fill="#fff" stroke="#707070"/>
<rect x="600" y="160" width="1" height="1" fill="#555"/>

<!-- line numbers -->
<g>
<text class="n" x="344" y="127">1</text><text class="n" x="344" y="144">2</text><text class="n" x="344" y="161">3</text><text class="n" x="344" y="178">14</text><text class="n" x="344" y="195">15</text><text class="n" x="344" y="212">16</text><text class="n" x="344" y="229">17</text><text class="n" x="344" y="246">18</text><text class="n" x="344" y="263">19</text><text class="n" x="344" y="280">20</text><text class="n" x="344" y="297">21</text><text class="n" x="344" y="314">22</text><text class="n" x="344" y="331">23</text><text class="n" x="344" y="348">24</text><text class="n" x="344" y="365">25</text><text class="n" x="344" y="382">26</text><text class="n" x="344" y="399">27</text><text class="n" x="344" y="416">28</text><text class="n" x="344" y="433">29</text><text class="n" x="344" y="450">30</text><text class="n" x="344" y="467">31</text><text class="n" x="344" y="484">32</text><text class="n" x="344" y="501">33</text><text class="n" x="344" y="518">34</text><text class="n" x="344" y="535">35</text><text class="n" x="344" y="552">36</text><text class="n" x="344" y="569">37</text><text class="n" x="344" y="586">38</text><text class="n" x="344" y="603">39</text><text class="n" x="344" y="620">40</text><text class="n" x="344" y="637">41</text><text class="n" x="344" y="654">42</text><text class="n" x="344" y="671">43</text><text class="n" x="344" y="688">44</text><text class="n" x="344" y="705">45</text><text class="n" x="344" y="722">46</text><text class="n" x="344" y="739">47</text><text class="n" x="344" y="756">48</text><text class="n" x="344" y="773">49</text><text class="n" x="344" y="790">50</text><text class="n" x="344" y="807">51</text>
</g>

<!-- code -->
<g class="m">
<text x="356.400" y="127"><tspan class="k">package</tspan> jp.ac.utsunomiya_u.is;</text>
<text x="357.400" y="161"><tspan class="k">import</tspan> java.io.BufferedReader;</text>
<text x="356.400" y="195"><tspan class="k">public</tspan> <tspan class="k">class</tspan> EchoServer {</text>
<text x="388.400" y="229"><tspan class="k">public</tspan> <tspan class="k">static</tspan> <tspan class="k">void</tspan> main(String[] <tspan class="v">args</tspan>) {</text>
<text x="420.400" y="246" class="c" style="fill:#3f7f5f">// Scanner</text>
<text x="676" y="246" style="fill:#3f7f5f">System.in</text>
<text x="420.400" y="263"><tspan class="k">try</tspan> (Scanner <tspan class="v">scanner</tspan> = <tspan class="k">new</tspan> Scanner(System.<tspan class="o">in</tspan>)) {</text>
<text x="452.400" y="280">System.<tspan class="o">out</tspan>.print(<tspan class="s">"EchoServer ("</tspan> + <tspan class="i">getMyIpAddress</tspan>() + <tspan class="s">") &gt; Input server port &gt; "</tspan>);</text>
<text x="452.400" y="297" style="fill:#3f7f5f">//</text>
<text x="452.400" y="314"><tspan class="k">int</tspan> <tspan class="v">port</tspan> = <tspan class="v">scanner</tspan>.nextInt();</text>
<text x="452.400" y="331" style="fill:#3f7f5f">// ServerSocket</text>
<text x="452.400" y="348"><tspan class="k">try</tspan> (ServerSocket <tspan class="v">serverSocket</tspan> = <tspan class="k">new</tspan> ServerSocket(<tspan class="v">port</tspan>)) {</text>
<text x="484.400" y="365">System.<tspan class="o">out</tspan>.println(<tspan class="s">"EchoServer ("</tspan> + <tspan class="i">getMyIpAddress</tspan>() + <tspan class="s">") &gt; Started and Listening for connections on port "</tspan> + <tspan class="v">serverSocket</tspan>.getLocalPort());</text>
<text x="484.400" y="382" style="fill:#3f7f5f">// EchoTask</text>
<text x="691.700" y="382" style="fill:#3f7f5f">ServerSocket</text>
<text x="831" y="382" style="fill:#3f7f5f">accept</text>
<text x="979.500" y="382" style="fill:#3f7f5f">Socket</text>
<text x="484.400" y="399">EchoTask <tspan class="v">echoTask</tspan> = <tspan class="k">new</tspan> EchoTask(<tspan class="v">serverSocket</tspan>.accept());</text>
<text x="484.400" y="416" style="fill:#3f7f5f">//</text>
<text x="484.400" y="433"><tspan class="v">echoTask</tspan>.call();</text>
<text x="452.400" y="450">} <tspan class="k">catch</tspan> (IOException <tspan class="v">ex</tspan>) {</text>
<text x="484.400" y="467">Logger.<tspan class="i">getLogger</tspan>(EchoServer.<tspan class="k">class</tspan>.getName()).log(Level.<tspan class="f">SEVERE</tspan>, <tspan class="k">null</tspan>, <tspan class="v">ex</tspan>);</text>
<text x="452.400" y="484">}</text>
<text x="420.400" y="501">}</text>
<text x="388.400" y="518">}</text>
<text x="388.400" y="552"><tspan class="k">private</tspan> <tspan class="k">static</tspan> String getMyIpAddress() {</text>
<text x="420.400" y="569"><tspan class="k">try</tspan> {</text>
<text x="452.400" y="586" style="fill:#3f7f5f">//</text>
<text x="537.500" y="586" style="fill:#3f7f5f">IP</text>
<text x="452.400" y="603"><tspan class="k">return</tspan> InetAddress.<tspan class="i">getLocalHost</tspan>().getHostAddress();</text>
<text x="420.400" y="620">} <tspan class="k">catch</tspan> (UnknownHostException <tspan class="v">ex</tspan>) {</text>
<text x="452.400" y="637">Logger.<tspan class="i">getLogger</tspan>(EchoServer.<tspan class="k">class</tspan>.getName()).log(Level.<tspan class="f">SEVERE</tspan>, <tspan class="k">null</tspan>, <tspan class="v">ex</tspan>);</text>
<text x="420.400" y="654">}</text>
<text x="420.400" y="671"><tspan class="k">return</tspan> <tspan class="k">null</tspan>;</text>
<text x="388.400" y="688">}</text>
<text x="388.400" y="722" style="fill:#3f5fbf">/**</text>
<text x="396.400" y="739" style="fill:#3f5fbf">* EchoServer</text>
<text x="503.600" y="739" style="fill:#3f5fbf">String</text>
<text x="396.400" y="756" style="fill:#3f5fbf">*/</text>
<text x="388.400" y="773"><tspan class="k">private</tspan> <tspan class="k">static</tspan> <tspan class="k">class</tspan> EchoTask {</text>
<text x="420.400" y="807" style="fill:#3f5fbf">/**</text>
</g>
<!-- Japanese comment segments -->
<g>
<text class="j" x="500.700" y="246" textLength="175" lengthAdjust="spacingAndGlyphs">クラスのインスタンス（標準入力</text>
<text class="j" x="748" y="246" textLength="73" lengthAdjust="spacingAndGlyphs">からの入力）</text>
<text class="j" x="476.500" y="297" textLength="93" lengthAdjust="spacingAndGlyphs">ポート番号入力</text>
<text class="j" x="571.500" y="331" textLength="278" lengthAdjust="spacingAndGlyphs">クラスのインスタンスをポート番号を指定して生成</text>
<text class="j" x="571.500" y="382" textLength="120" lengthAdjust="spacingAndGlyphs">クラスのインスタンスを</text>
<text class="j" x="787" y="382" textLength="44" lengthAdjust="spacingAndGlyphs">クラスの</text>
<text class="j" x="879" y="382" textLength="100" lengthAdjust="spacingAndGlyphs">メソッドで返される</text>
<text class="j" x="1027.500" y="382" textLength="68" lengthAdjust="spacingAndGlyphs">を元に生成</text>
<text class="j" x="507.500" y="416" textLength="78.500" lengthAdjust="spacingAndGlyphs">データ送受信</text>
<text class="j" x="477" y="586" textLength="60" lengthAdjust="spacingAndGlyphs">自ホストの</text>
<text class="j" x="553" y="586" textLength="74" lengthAdjust="spacingAndGlyphs">アドレス取得</text>
<text class="j jd" x="492.400" y="739" textLength="11" lengthAdjust="spacingAndGlyphs">で</text>
<text class="j jd" x="553" y="739" textLength="121" lengthAdjust="spacingAndGlyphs">の送受信を担うクラス</text>
</g>

<!-- task list -->
<rect x="1785" y="86" width="489" height="368" rx="7" fill="#fff"/>
<path d="M1786 108V92a6 6 0 0 1 6-6h81a6 6 0 0 1 6 6v16z" fill="url(#tab)"/>
<use href="#ts" x="1792" y="91" width="14" height="18"/>
<text x="1809.800" y="104" textLength="42.700" lengthAdjust="spacingAndGlyphs">Task List</text>
<use href="#cl" x="1861" y="94" width="11" height="11"/>
<use href="#ntk" x="1969" y="90" width="16" height="18"/>
<path d="M1990 97h7l-3.500 4.500z" fill="#222"/>
<rect x="2004" y="90" width="1" height="18" fill="#8c8c8c"/>
<rect x="2009.500" y="88.500" width="22" height="20" fill="#c5e0f7" stroke="#90c8f6"/>
<use href="#tr1" x="2013" y="90" width="16" height="18"/>
<use href="#tr2" x="2036" y="90" width="16" height="18"/>
<rect x="2057" y="90" width="1" height="18" fill="#8c8c8c"/>
<use href="#vw2" x="2067" y="91" width="16" height="16"/>
<rect x="2088" y="90" width="1" height="18" fill="#8c8c8c"/>
<use href="#sx" x="2098" y="89" width="16" height="20"/>
<use href="#ppl" x="2119" y="89" width="18" height="20"/>
<use href="#col" x="2143.500" y="91" width="16" height="16"/>
<rect x="2165" y="90" width="1" height="18" fill="#8c8c8c"/>
<use href="#syn" x="2174" y="89" width="16" height="20"/>
<path d="M2206.500 94.500h9l-4.500 4.500z" fill="#fff" stroke="#666"/>
<rect x="2226.500" y="94" width="9" height="3.500" fill="#fff" stroke="#666"/>
<rect x="2249.500" y="94.500" width="10" height="10" fill="#fff" stroke="#666"/><path d="M2249.500 97.500h10" stroke="#666"/>
<rect x="1791.500" y="119.500" width="172" height="19" fill="#fff" stroke="#a0a0a0"/>
<text x="1800.600" y="133" textLength="21.800" lengthAdjust="spacingAndGlyphs" style="fill:#666">Find</text>
<use href="#srch" x="1946" y="122" width="13" height="13"/>
<path d="M1977 124l4 5-4 5z" fill="#444"/><path d="M2018 124l4 5-4 5z" fill="#444"/>
<text x="1991.600" y="133" textLength="13" lengthAdjust="spacingAndGlyphs" class="lnk">All</text>
<text x="2031.300" y="133" textLength="51.400" lengthAdjust="spacingAndGlyphs" class="lnk">Activate...</text>
<circle cx="2262" cy="129" r="6.500" fill="#eef6fc" stroke="#2a72b8" stroke-width="1.500"/>
<text x="2258.600" y="133" style="font-size:10.500px;font-weight:bold;fill:#2a72b8">?</text>

<!-- outline -->
<rect x="1785" y="459" width="489" height="618" rx="7" fill="#fff"/>
<path d="M1786 481v-16a6 6 0 0 1 6-6h76a6 6 0 0 1 6 6v16z" fill="url(#tab)"/>
<use href="#out" x="1791" y="465" width="14" height="15"/>
<text x="1809.300" y="477" textLength="39" lengthAdjust="spacingAndGlyphs">Outline</text>
<use href="#cl" x="1856.500" y="467" width="11" height="11"/>
<use href="#vw" x="2037" y="465" width="14" height="14"/>
<use href="#col" x="2059.500" y="464.500" width="15" height="15"/>
<use href="#az" x="2082" y="463" width="17" height="17"/>
<use href="#nof" x="2106" y="464" width="15" height="15"/>
<use href="#nos" x="2129" y="465" width="13" height="13"/>
<text x="2140" y="470" style="font-size:7px;font-weight:bold;fill:#2a5ca8">S</text>
<circle cx="2159" cy="472" r="3.700" fill="#4a9a58" stroke="#2a7a40"/>
<use href="#nos" x="2175" y="465" width="13" height="13"/>
<text x="2186" y="470" style="font-size:7px;font-weight:bold;fill:#2a5ca8">L</text>
<path d="M2206.500 468.500h9l-4.500 4.500z" fill="#fff" stroke="#666"/>
<rect x="2226.500" y="467.500" width="9" height="3.500" fill="#fff" stroke="#666"/>
<rect x="2249.500" y="467.500" width="10" height="10" fill="#fff" stroke="#666"/><path d="M2249.500 470.500h10" stroke="#666"/>

<rect x="1839" y="559" width="79" height="18" fill="#d9d9d9"/>
<use href="#pk2" x="1816" y="488" width="16" height="16"/>
<path d="M1797.500 512l3.500 3.500 3.500-3.500" fill="none" stroke="#444" stroke-width="1.700"/>
<use href="#cc" x="1816.500" y="505" width="16" height="16"/>
<path d="M1833 516v6l4.500-3z" fill="#4a9a58"/>
<circle cx="1849" cy="533" r="3.700" fill="#4a9a58" stroke="#2a7a40"/>
<rect x="1846" y="548" width="6.500" height="6.500" fill="#ef5a64" stroke="#c03040"/>
<use href="#cc" x="1841.500" y="560" width="15" height="15"/>
<rect x="1849.500" y="568" width="6.500" height="6.500" fill="#ef5a64" stroke="#c03040"/>
<path d="M1825 562.500l3.500 3.500-3.500 3.500" fill="none" stroke="#a8a8a8" stroke-width="1.800"/>
<text x="1857.500" y="529" style="font-size:8px;fill:#c83050">S</text>
<text x="1857.500" y="547" style="font-size:8px;fill:#c83050">S</text>
<text x="1857.500" y="566" style="font-size:8px;fill:#c83050">S</text>
<text x="1843.300" y="500" textLength="112.400" lengthAdjust="spacingAndGlyphs">jp.ac.utsunomiya_u.is</text>
<text x="1843.300" y="518" textLength="57.700" lengthAdjust="spacingAndGlyphs">EchoServer</text>
<text x="1868.300" y="536" textLength="72.300" lengthAdjust="spacingAndGlyphs">main(String[])</text>
<text x="1944" y="536" textLength="28.700" lengthAdjust="spacingAndGlyphs" class="dec">: void</text>
<text x="1868.300" y="554" textLength="93.300" lengthAdjust="spacingAndGlyphs">getMyIpAddress()</text>
<text x="1965" y="554" textLength="36.300" lengthAdjust="spacingAndGlyphs" class="dec">: String</text>
<text x="1868.300" y="572" textLength="47.700" lengthAdjust="spacingAndGlyphs">EchoTask</text>

<!-- console panel -->
<rect x="313.500" y="831.500" width="1960" height="245.500" rx="7" fill="#fff" stroke="#b0bccc"/>
<path d="M314 857v-19a6 6 0 0 1 6-6h1947a6 6 0 0 1 6 6v19z" fill="#cfdeee"/>
<rect x="314" y="856" width="1959" height="1" fill="#aab6c6"/>
<path d="M554 857v-19a6 6 0 0 1 6-6h79a6 6 0 0 1 6 6v19z" fill="url(#ctab)" stroke="#b8c4d4"/>
<use href="#prb" x="319" y="836" width="13" height="18"/>
<text x="337.500" y="849" textLength="49.500" lengthAdjust="spacingAndGlyphs">Problems</text>
<circle cx="401" cy="846" r="5" fill="#e8eef6" stroke="#5a80b0"/>
<text x="417" y="849" textLength="40.700" lengthAdjust="spacingAndGlyphs">Javadoc</text>
<use href="#wdoc" x="469" y="835" width="15" height="19"/>
<text x="488.300" y="849" textLength="58.700" lengthAdjust="spacingAndGlyphs">Declaration</text>
<use href="#mon" x="558" y="835" width="16" height="17"/>
<text x="576.500" y="849" textLength="42.100" lengthAdjust="spacingAndGlyphs">Console</text>
<use href="#cl" x="626.500" y="839" width="11" height="11"/>

<use href="#stop" x="1926" y="838" width="13" height="13"/>
<use href="#xg" x="1947" y="836" width="16" height="16"/>
<use href="#xxg" x="1970.500" y="836" width="16" height="16"/>
<rect x="1992" y="835" width="1" height="18" fill="#707880"/>
<use href="#clr" x="2000" y="836" width="16" height="16"/>
<use href="#lck" x="2025" y="836" width="16" height="16"/>
<use href="#wrp" x="2048" y="836" width="16" height="16"/>
<rect x="2067.500" y="833" width="22" height="21" fill="#a8d0f4" stroke="#7ab4ec"/>
<use href="#cs1" x="2071" y="835" width="16" height="16"/>
<use href="#cs2" x="2093.500" y="835" width="16" height="16"/>
<rect x="2115" y="835" width="1" height="18" fill="#707880"/>
<use href="#pin" x="2124" y="836" width="16" height="16"/>
<use href="#mon" x="2149" y="836" width="15" height="15"/>
<path d="M2171 842.500h7l-3.500 4z" fill="#222"/>
<use href="#ncs" x="2186" y="836" width="16" height="16"/>
<path d="M2209 842.500h7l-3.500 4z" fill="#222"/>
<rect x="2226.500" y="841" width="9" height="3.500" fill="#fff" stroke="#666"/>
<rect x="2249.500" y="838.500" width="10" height="10" fill="#fff" stroke="#666"/><path d="M2249.500 841.500h10" stroke="#666"/>

<text x="316.700" y="870.700" textLength="545.300" lengthAdjust="spacingAndGlyphs">EchoClient (1) [Java Application] C:¥Program Files¥Java¥jre1.8.0_131¥bin¥javaw.exe (2017/07/26 10:08:19)</text>
<rect x="316" y="874" width="1955" height="1" fill="#a0a0a0"/>
<g class="m">
<text x="317.600" y="889">EchoClient (192.168.11.100) &gt; Input IP address of EchoServer &gt; <tspan class="g">localhost</tspan></text>
<text x="317.600" y="906">EchoClient (192.168.11.100) &gt; Input port number of EchoServer &gt; <tspan class="g">10000</tspan></text>
<text x="317.600" y="923">EchoClient (192.168.11.100) &gt; <tspan class="g">Hello</tspan></text>
<text x="317.600" y="940">EchoServer (127.0.0.1) &gt; Hello</text>
<text x="317.600" y="957">EchoClient (192.168.11.100) &gt;</text>
</g>
<rect x="318" y="927" width="1" height="17" fill="#000"/>
<rect x="2255" y="876" width="16" height="183" fill="#f0f0f0"/>
<path d="M2258.500 888l4-4 4 4" fill="none" stroke="#c0c0c0" stroke-width="2"/>
<rect x="316" y="1059" width="1955" height="16" fill="#f0f0f0"/>
<path d="M326 1063l-4 4 4 4" fill="none" stroke="#b8b8b8" stroke-width="2"/>

<!-- status bar grip -->
<path d="M1993.500 1088v10" stroke="#9aa4b8" stroke-dasharray="2 2"/>

<!-- red ellipse annotation -->
<path fill="#ed1c24" fill-rule="evenodd" shape-rendering="crispEdges" d="M274 914a329.500 91 0 1 0 659 0a329.500 91 0 1 0-659 0zM282.500 914a321 86 0 1 1 642 0a321 86 0 1 1-642 0z"/>
</svg>
</body></html>
